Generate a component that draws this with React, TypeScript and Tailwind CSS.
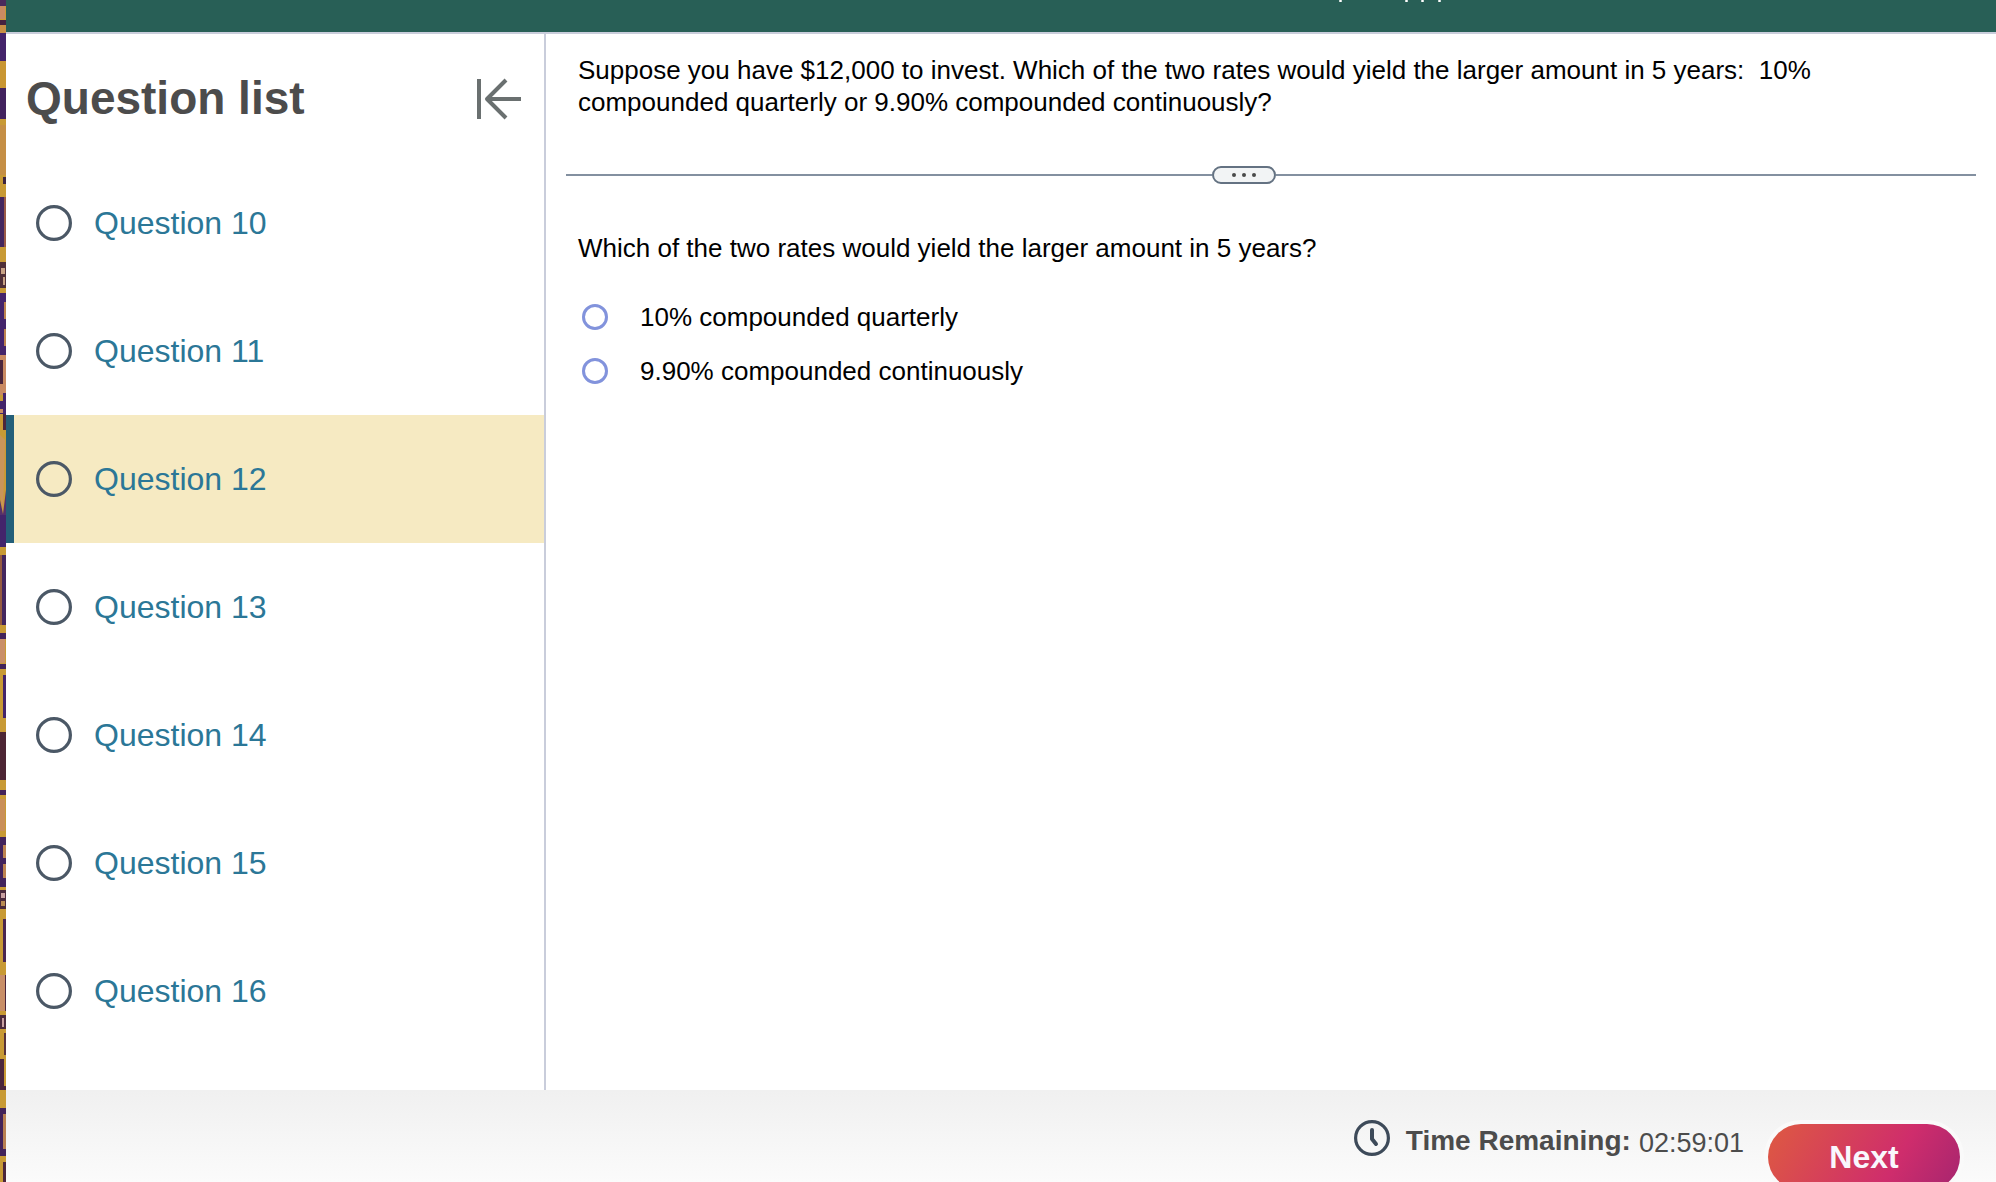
import { useState } from "react";

const questions = [10, 11, 12, 13, 14, 15, 16];
const choices = ["10% compounded quarterly", "9.90% compounded continuously"];

// [x, y, width, height, colour]
const wallpaper: [number, number, number, number, string][] = [
  [0, 0, 6, 6, "#4a2a5c"],
  [0, 6, 5, 13, "#c98a62"],
  [0, 20, 6, 5, "#472240"],
  [0, 25, 6, 8, "#c98f45"],
  [0, 33, 6, 28, "#44246b"],
  [0, 88, 6, 31, "#42225e"],
  [0, 125, 6, 50, "#c58f45"],
  [3, 177, 3, 7, "#3c2440"],
  [0, 197, 4, 50, "#43265e"],
  [4, 197, 2, 50, "#9a5a48"],
  [0, 262, 6, 26, "#4f2f38"],
  [1, 268, 4, 6, "#c7a184"],
  [3, 277, 2, 8, "#c7a184"],
  [0, 293, 6, 62, "#44246b"],
  [4, 302, 2, 17, "#bd8350"],
  [4, 329, 2, 17, "#bd8350"],
  [0, 355, 6, 40, "#c98a62"],
  [0, 360, 3, 24, "#4b263c"],
  [3, 393, 3, 8, "#43246b"],
  [0, 401, 6, 13, "#43246b"],
  [0, 409, 3, 4, "#c98a62"],
  [3, 414, 3, 16, "#4b263c"],
  [0, 515, 6, 32, "#43246b"],
  [2, 555, 4, 70, "#43265e"],
  [0, 555, 2, 70, "#955a40"],
  [0, 633, 6, 6, "#42235a"],
  [0, 639, 5, 24, "#c98f68"],
  [0, 664, 6, 5, "#42235a"],
  [3, 675, 3, 43, "#43246b"],
  [0, 732, 6, 48, "#4d2634"],
  [0, 790, 6, 5, "#43235a"],
  [0, 799, 5, 32, "#c98f58"],
  [0, 837, 6, 50, "#42235c"],
  [3, 845, 3, 13, "#bd8350"],
  [3, 864, 3, 14, "#bd8350"],
  [0, 890, 6, 19, "#4b2a3c"],
  [1, 893, 4, 5, "#c9a0a0"],
  [1, 901, 4, 5, "#b98b52"],
  [3, 919, 3, 43, "#4a2650"],
  [0, 975, 5, 36, "#c98f68"],
  [5, 975, 1, 36, "#4b263c"],
  [0, 1015, 6, 14, "#4b2a3c"],
  [2, 1018, 2, 9, "#c9a0a0"],
  [4, 1033, 2, 22, "#57323a"],
  [0, 1059, 4, 31, "#4b263c"],
  [4, 1086, 2, 4, "#4b263c"],
  [0, 1108, 6, 48, "#43235a"],
  [3, 1114, 3, 35, "#b98052"],
  [3, 1162, 3, 20, "#4b263c"],
];

function Wallpaper() {
  return (
    <div className="w-[6px] shrink-0 overflow-hidden bg-[#c89a35]">
      <svg width="6" height="1182" aria-hidden="true">
        {wallpaper.map(([x, y, width, height, fill], i) => (
          <rect key={"block" + i} x={x} y={y} width={width} height={height} fill={fill} />
        ))}
        <path d="M0 435L5 440L3 512L0 495Z" fill="#c9955a" />
        <path d="M0 61H6V88H0Z" fill="#c99632" />
        <path d="M0 500L3 514L6 490V515H0Z" fill="#55306a" />
      </svg>
    </div>
  );
}

function CollapseIcon() {
  return (
    <svg
      width="46"
      height="42"
      viewBox="0 0 46 42"
      fill="none"
      stroke="#6a7070"
      strokeWidth="4"
      aria-hidden="true"
    >
      <path d="M3 1V41" />
      <path d="M45 21H11" />
      <path d="M30 2L11 21L30 40" strokeLinejoin="round" />
    </svg>
  );
}

function ClockIcon() {
  return (
    <svg
      width="36"
      height="36"
      viewBox="0 0 36 36"
      fill="none"
      stroke="#3d4a59"
      strokeLinecap="round"
      strokeLinejoin="round"
      aria-hidden="true"
    >
      <circle cx="18" cy="18" r="16.4" strokeWidth="3.2" />
      <path d="M18 10V19L22 24" strokeWidth="4" />
    </svg>
  );
}

function Sidebar({ current }: { current: number }) {
  return (
    <aside className="w-[540px] shrink-0 overflow-hidden border-r-2 border-[#c9cddb]">
      <div className="flex h-[125px] items-center justify-between pt-1 pl-5 pr-[22px]">
        <h1 className="text-[46px] font-bold text-[#4c4c4c]">Question list</h1>
        <button type="button" aria-label="Collapse question list">
          <CollapseIcon />
        </button>
      </div>
      <ul>
        {questions.map((n) => (
          <li key={"question" + n}>
            <a
              href={"#question-" + n}
              aria-current={n === current ? "true" : undefined}
              className={
                n === current
                  ? "flex h-32 items-center gap-[22px] border-l-8 border-[#245f79] bg-[#f6eac2] pl-[22px] text-[32px] text-[#2b7797]"
                  : "flex h-32 items-center gap-[22px] border-l-8 border-transparent pl-[22px] text-[32px] text-[#2b7797]"
              }
            >
              <svg width="36" height="36" viewBox="0 0 36 36" aria-hidden="true">
                <circle cx="18" cy="18" r="16.4" fill="none" stroke="#4b5866" strokeWidth="3.2" />
              </svg>
              Question {n}
            </a>
          </li>
        ))}
      </ul>
    </aside>
  );
}

function Exercise() {
  const [answer, setAnswer] = useState("");

  return (
    <main className="min-w-0 flex-1 px-5 pt-5 text-[26px] leading-8 text-black">
      <p className="px-3">
        Suppose you have $12,000 to invest. Which of the two rates would yield
        the larger amount in 5 years:&nbsp; 10% compounded quarterly or 9.90%
        compounded continuously?
      </p>
      <div className="mt-12 flex items-center">
        <div className="h-[2px] flex-12 bg-[#8390a0]" />
        <button
          type="button"
          aria-label="Resize panels"
          className="flex h-[18px] w-16 items-center justify-center gap-[6px] rounded-full border-2 border-[#647282] bg-[#f2f4f5]"
        >
          <span className="size-1 rounded-full bg-[#4a4a4a]" />
          <span className="size-1 rounded-full bg-[#4a4a4a]" />
          <span className="size-1 rounded-full bg-[#4a4a4a]" />
        </button>
        <div className="h-[2px] flex-13 bg-[#8390a0]" />
      </div>
      <fieldset className="px-3">
        <legend className="pt-12">
          Which of the two rates would yield the larger amount in 5 years?
        </legend>
        <div className="mt-[26px]">
          {choices.map((choice) => (
            <label key={choice} className="flex h-[54px] items-center gap-8 pl-1">
              <input
                type="radio"
                name="answer"
                value={choice}
                checked={answer === choice}
                onChange={() => setAnswer(choice)}
                className="size-[26px] appearance-none rounded-full border-[3px] border-[#8293dc] bg-white checked:bg-[#8293dc]"
              />
              {choice}
            </label>
          ))}
        </div>
      </fieldset>
    </main>
  );
}

function Footer() {
  return (
    <footer className="flex h-[92px] shrink-0 items-start justify-end overflow-hidden bg-linear-to-b from-[#f0f0f0] to-[#fbfbfb] pr-9 text-[28px] leading-9 text-[#4c4c4c]">
      <div className="mt-[30px] mr-4">
        <ClockIcon />
      </div>
      <p className="mt-[33px] mr-6 flex gap-2">
        <strong>Time Remaining:</strong>
        <time className="text-[27px] leading-10">02:59:01</time>
      </p>
      <button
        type="button"
        className="mt-[34px] h-[66px] w-48 rounded-full bg-linear-[120deg] from-[#de5a41] via-[#cf2d6c] via-65% to-[#a6256f] text-[32px] font-bold text-[#f9f7fd] ring-4 ring-[#fafafa]"
      >
        Next
      </button>
    </footer>
  );
}

export default function App() {
  return (
    <div className="flex h-screen overflow-hidden bg-white font-['Liberation_Sans',Arial,sans-serif]">
      <Wallpaper />
      <div className="flex min-w-0 flex-1 flex-col">
        <header className="flex h-[34px] shrink-0 justify-end border-b-2 border-[#c9cddb] bg-[#285f56] pr-[553px]">
          <svg width="104" height="2" fill="#fff" aria-hidden="true">
            <rect x="0" width="3" height="2" rx="1" />
            <rect x="66" width="3" height="2" rx="1" />
            <rect x="82" width="3" height="2" rx="1" />
            <rect x="99" width="3" height="2" rx="1" />
          </svg>
        </header>
        <div className="flex min-h-0 flex-1">
          <Sidebar current={12} />
          <Exercise />
        </div>
        <Footer />
      </div>
    </div>
  );
}
